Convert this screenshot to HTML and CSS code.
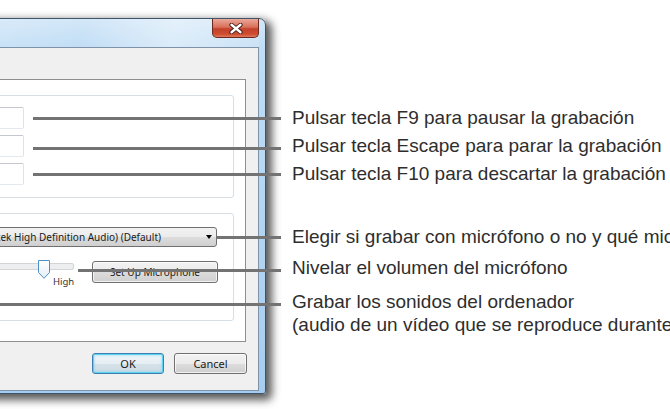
FILE: index.html
```html
<!DOCTYPE html>
<html lang="es">
<head>
  <meta charset="UTF-8">
  <title>Opciones de grabación</title>
  <link rel="stylesheet" href="styles.css">
</head>
<body>

  <div class="stage">

    <!-- ventana de opciones (recortada a la izquierda) -->
    <div class="window">
      <div class="titlebar">
        <span class="close-btn">
          <svg width="14" height="11" viewBox="0 0 14 11">
            <path d="M2.5 1.8 L11.5 9.2 M11.5 1.8 L2.5 9.2" stroke="#3a1a14" stroke-width="4.2" stroke-linecap="round"/>
            <path d="M2.5 1.8 L11.5 9.2 M11.5 1.8 L2.5 9.2" stroke="#ffffff" stroke-width="2.4" stroke-linecap="round"/>
          </svg>
        </span>
      </div>

      <div class="client">
        <div class="panel">
          <div class="group group-keys">
            <div class="textbox"></div>
            <div class="textbox"></div>
            <div class="textbox"></div>
          </div>

          <div class="group group-audio">
            <div class="combo">
              <span class="combo-text">Micrófono (Realtek High Definition Audio) (Default)</span>
              <span class="combo-arrow"></span>
            </div>
            <div class="mic-row">
              <div class="slider">
                <div class="slider-track"></div>
                <svg class="slider-thumb" width="12" height="19" viewBox="0 0 12 19">
                  <defs>
                    <linearGradient id="thumbFill" x1="0" y1="0" x2="0" y2="1">
                      <stop offset="0" stop-color="#ffffff"/>
                      <stop offset="1" stop-color="#e4eef7"/>
                    </linearGradient>
                  </defs>
                  <path d="M0.5 0.5 H11.5 V12.5 L6 18.3 L0.5 12.5 Z" fill="url(#thumbFill)" stroke="#4f8fc4" stroke-width="1"/>
                </svg>
                <span class="slider-label">High</span>
              </div>
              <button class="win-btn setup-btn">Set Up Microphone</button>
            </div>
          </div>
        </div>

        <div class="dialog-buttons">
          <button class="win-btn ok-btn">OK</button>
          <button class="win-btn">Cancel</button>
        </div>
      </div>
    </div>

    <!-- líneas de las explicaciones -->
    <div class="callout callout-pause"></div>
    <div class="callout callout-stop"></div>
    <div class="callout callout-discard"></div>
    <div class="callout callout-mic"></div>
    <div class="callout callout-level"></div>
    <div class="callout callout-sounds"></div>

    <div class="labels">
      <div class="label">Pulsar tecla F9 para pausar la grabación</div>
      <div class="label">Pulsar tecla Escape para parar la grabación</div>
      <div class="label">Pulsar tecla F10 para descartar la grabación</div>
      <div class="label label-mic">Elegir si grabar con micrófono o no y qué micrófono usar</div>
      <div class="label label-level">Nivelar el volumen del micrófono</div>
      <div class="label label-sounds">Grabar los sonidos del ordenador</div>
      <div class="label label-sounds-2">(audio de un vídeo que se reproduce durante la grabación)</div>
    </div>

  </div>

</body>
</html>
```

FILE: styles.css
```css
body {
  margin: 0;
  padding: 0;
  background-color: #ffffff;
  font-family: "Noto Sans", sans-serif;
  overflow: hidden;
}

.stage {
  position: relative;
  width: 670px;
  height: 409px;
  overflow: hidden;
}

/* ventana */
.window {
  position: absolute;
  left: -40px;
  top: 18px;
  width: 306px;
  height: 376px;
  box-sizing: border-box;
  padding: 0 6px 2px 6px;
  border: 1px solid #3f5468;
  border-radius: 0 7px 3px 0;
  background: linear-gradient(to bottom, #d3e7f8 0, #c0ddf5 30px, #a6cdef 100%);
  box-shadow: 4px 4px 8px 2px rgba(0, 0, 0, 0.65);
}

.titlebar {
  height: 28px;
  display: flex;
  justify-content: flex-end;
  align-items: flex-start;
  background: linear-gradient(100deg, rgba(255,255,255,0.2) 0%, rgba(255,255,255,0) 40%, rgba(255,255,255,0.4) 70%, rgba(255,255,255,0.15) 100%);
}

.close-btn {
  width: 47px;
  height: 19px;
  box-sizing: border-box;
  display: flex;
  align-items: center;
  justify-content: center;
  border: 1px solid #6b2a1f;
  border-top: none;
  border-radius: 0 0 5px 5px;
  background: linear-gradient(to bottom, #eaa899 0%, #d9705a 45%, #c3402a 55%, #cf4e31 85%, #e07a5c 100%);
}

.client {
  height: 344px;
  box-sizing: border-box;
  border: 1px solid #7f93a8;
  background-color: #f0f0f0;
  overflow: hidden;
}

.panel {
  height: 263px;
  box-sizing: border-box;
  margin: 31px 12px 0 10px;
  padding-top: 15px;
  background-color: #ffffff;
  border: 1px solid #8e8f8f;
}

.group {
  margin: 0 11px 0 10px;
  box-sizing: border-box;
  border: 1px solid #d5dfe5;
  border-radius: 3px;
  padding-left: 7px;
}

.group-keys {
  height: 103px;
  padding-top: 11px;
  display: flex;
  flex-direction: column;
  gap: 6px;
}

.textbox {
  width: 27px;
  height: 22px;
  box-sizing: border-box;
  border: 1px solid;
  border-color: #c4c7cc #dfe3e8 #e3e9ef #e2e3ea;
  border-radius: 2px;
  background-color: #ffffff;
}

.group-audio {
  height: 108px;
  margin-top: 15px;
  padding-top: 13px;
}

.combo {
  width: 220px;
  height: 20px;
  box-sizing: border-box;
  display: flex;
  align-items: center;
  justify-content: flex-end;
  padding-right: 4px;
  border: 1px solid #707070;
  border-radius: 3px;
  background: linear-gradient(to bottom, #f2f2f2 0%, #ebebeb 50%, #dddddd 51%, #cfcfcf 100%);
  overflow: hidden;
}

.combo-text {
  flex: none;
  white-space: nowrap;
  font-size: 10px;
  color: #1a1a1a;
  margin-right: 45px;
}

.combo-arrow {
  flex: none;
  width: 0;
  height: 0;
  border-left: 3.5px solid transparent;
  border-right: 3.5px solid transparent;
  border-top: 4px solid #000000;
}

.mic-row {
  display: flex;
  align-items: flex-start;
  margin-top: 13px;
}

.slider {
  position: relative;
  width: 81px;
  height: 24px;
  flex: none;
}

.slider-track {
  margin-top: 3px;
  width: 77px;
  height: 7px;
  box-sizing: border-box;
  border: 1px solid #d2d4d6;
  border-radius: 2px;
  background-color: #eceeef;
}

/* el pulgar y la etiqueta van encima de la pista */
.slider-thumb {
  position: absolute;
  left: 41px;
  top: 0;
}

.slider-label {
  position: absolute;
  left: 56px;
  top: 16px;
  font-size: 9.5px;
  line-height: 12px;
  color: #333333;
}

.win-btn {
  box-sizing: border-box;
  padding: 0;
  border: 1px solid #707070;
  border-radius: 3px;
  background: linear-gradient(to bottom, #f2f2f2 0%, #ebebeb 50%, #dddddd 51%, #cfcfcf 100%);
  font-family: "Noto Sans", sans-serif;
  font-size: 10px;
  color: #1a1a1a;
  box-shadow: inset 0 0 0 1px rgba(255, 255, 255, 0.7);
}

.setup-btn {
  width: 126px;
  height: 22px;
  margin: 1px 0 0 14px;
}

.dialog-buttons {
  display: flex;
  justify-content: flex-end;
  gap: 10px;
  margin-top: 11px;
  padding-right: 11px;
}

.dialog-buttons .win-btn {
  width: 73px;
  height: 21px;
  font-size: 11px;
}

.dialog-buttons .ok-btn {
  width: 72px;
  border-color: #3c7fb1;
  background: linear-gradient(to bottom, #f1f6f9 0%, #e5eef3 50%, #d6e2e9 51%, #cedbe3 100%);
  box-shadow: inset 0 0 0 1px #5fd2f3, inset 0 0 2px 2px rgba(120, 210, 240, 0.4);
}

/* líneas */
.callout {
  position: absolute;
  height: 3px;
  background-color: #737373;
}

.callout-pause {
  top: 117px;
  left: 33px;
  width: 248px;
}

.callout-stop {
  top: 147px;
  left: 33px;
  width: 248px;
}

.callout-discard {
  top: 173px;
  left: 33px;
  width: 248px;
}

.callout-mic {
  top: 236px;
  left: 216px;
  width: 65px;
}

.callout-level {
  top: 269px;
  left: 78px;
  width: 203px;
}

.callout-sounds {
  top: 303px;
  left: 0;
  width: 281px;
}

/* textos */
.labels {
  position: absolute;
  left: 292px;
  top: 104px;
}

.label {
  font-family: "Liberation Sans", Arial, sans-serif;
  font-size: 19px;
  line-height: 28px;
  color: #2e2e2e;
  white-space: nowrap;
}

.label-mic {
  margin-top: 35px;
}

.label-level {
  margin-top: 3px;
}

.label-sounds {
  margin-top: 6px;
}

.label-sounds-2 {
  margin-top: -5px;
}
```
